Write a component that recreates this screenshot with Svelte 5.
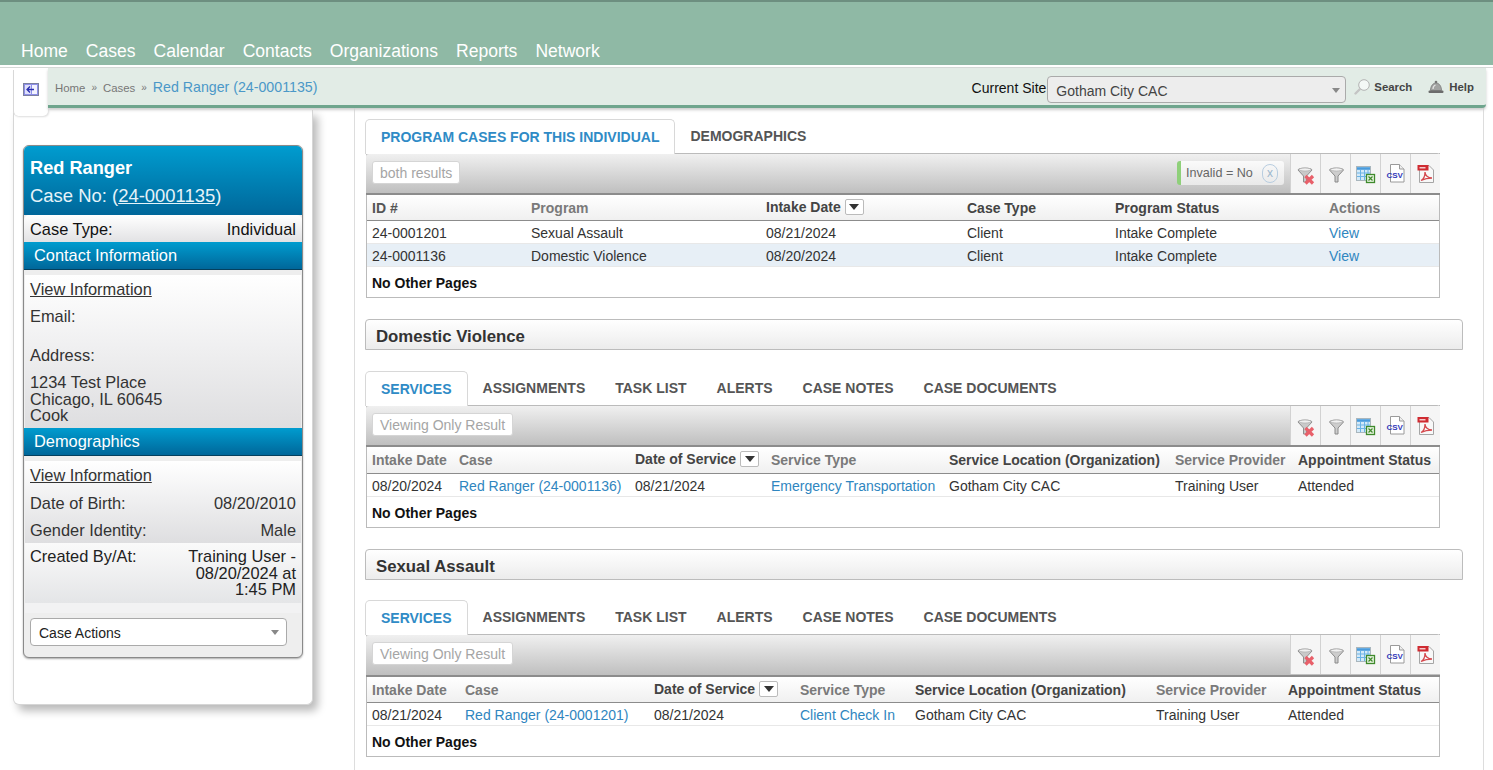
<script>
  const nav = ['Home', 'Cases', 'Calendar', 'Contacts', 'Organizations', 'Reports', 'Network'];
  const subTabs = ['ASSIGNMENTS', 'TASK LIST', 'ALERTS', 'CASE NOTES', 'CASE DOCUMENTS'];
  const t2 = [
    { h: 'Intake Date' }, { h: 'Case' }, { h: 'Date of Service', dark: true, sort: true }, { h: 'Service Type' },
    { h: 'Service Location (Organization)', dark: true }, { h: 'Service Provider' }, { h: 'Appointment Status', dark: true }
  ];
  const domestic = ['08/20/2024', 'Red Ranger (24-0001136)', '08/21/2024', 'Emergency Transportation', 'Gotham City CAC', 'Training User', 'Attended'];
  const sexual = ['08/21/2024', 'Red Ranger (24-0001201)', '08/21/2024', 'Client Check In', 'Gotham City CAC', 'Training User', 'Attended'];
  const links = [1, 3];
</script>

{#snippet tools()}
  <div class="tools">
    <span class="tool"><svg viewBox="0 0 20 22" width="20" height="22"><path d="M2 6C2 3.5 16 3.5 16 6L10.5 12V18H7.500V12z" fill="#c9c9c9" stroke="#8f8f8f"/><ellipse cx="9" cy="5.500" rx="6" ry="1.500" fill="#f0f0f0" stroke="#aaa" stroke-width="0.6"/><path d="M9.500 12l7.500 7.500M17 12l-7.500 7.500" stroke="#e8606a" stroke-width="3.200"/></svg></span>
    <span class="tool"><svg viewBox="0 0 20 22" width="20" height="22"><path d="M3.500 6C3.500 3.500 17.500 3.500 17.500 6L12 12V18H9V12z" fill="#cdcdcd" stroke="#8a8a8a"/><ellipse cx="10.500" cy="5.500" rx="6" ry="1.500" fill="#f2f2f2" stroke="#aaa" stroke-width="0.6"/></svg></span>
    <span class="tool"><svg viewBox="0 0 20 22" width="20" height="22"><rect x="0.500" y="2.500" width="14" height="14" fill="#d3e9f8" stroke="#a9b6bd"/><path d="M1 4.500h13" stroke="#4a9bdc" stroke-width="2.600"/><path d="M4.500 6v10M8.500 6v10M12 6v10M1 9h13M1 12.500h13" stroke="#6ab3e6"/><rect x="10.500" y="10.500" width="8" height="8" fill="#e9f4e2" stroke="#3f8a2c" stroke-width="1.300"/><path d="M12.500 12.500l4 4M16.500 12.500l-4 4" stroke="#3f8a2c" stroke-width="1.200"/></svg></span>
    <span class="tool"><svg viewBox="0 0 20 22" width="20" height="22"><path d="M4.500 0.500h9l4.500 4.500v13h-13.500z" fill="#fff" stroke="#9a9a9a"/><path d="M13.500 0.500v4.500h4.500" fill="#eee" stroke="#9a9a9a"/><text x="0.500" y="14" class="csv">CSV</text></svg></span>
    <span class="tool"><svg viewBox="0 0 20 22" width="20" height="22"><path d="M3.500 1.500h9.500l4.500 4.500v12.500h-14z" fill="#f8f8f8" stroke="#a5a5a5"/><rect x="1.500" y="1" width="11" height="5.500" fill="#cf2b31"/><rect x="3.500" y="3" width="6" height="1.500" fill="#f6c9cb"/><path d="M5 16.500c3-1.500 4-5 4-8.500 0 3.500 3 6 7 6-4 0-8 1-11 2.500z" fill="none" stroke="#d5484d" stroke-width="1.300"/></svg></span>
  </div>
{/snippet}

{#snippet sort()}
  <span class="sort"><svg viewBox="0 0 10 6" width="10" height="6"><path d="M0 0h10L5 6z" fill="#333"/></svg></span>
{/snippet}

{#snippet serviceSection(title, cols, row, cls)}
  <div class="section-title {cls}">{title}</div>
  <div class="tabs sub {cls}">
    <span class="tab active">SERVICES</span>
    {#each subTabs as t}<span class="tab">{t}</span>{/each}
  </div>
  <div class="panel">
    <div class="toolbar {cls}">
      <button class="soft">Viewing Only Result</button>
      <span class="spring"></span>
      {@render tools()}
    </div>
    <div class="grid head {cls}">
      {#each cols as c}
        <span class:dark={c.dark} class:raised={c.sort}>{c.h}{#if c.sort}{@render sort()}{/if}</span>
      {/each}
    </div>
    <div class="grid row {cls}">
      {#each row as cell, i}
        <span class:link={links.includes(i)}>{cell}</span>
      {/each}
    </div>
    <div class="foot">No Other Pages</div>
  </div>
{/snippet}

<div class="page">
  <header class="topnav">
    {#each nav as n}<span>{n}</span>{/each}
  </header>

  <div class="crumbrow">
    <div class="collapse">
      <svg viewBox="0 0 16 13" width="16" height="13"><rect x="0.5" y="0.5" width="15" height="12" fill="#8d8fe8" stroke="#7b7f9f"/><rect x="9" y="2" width="5" height="9" fill="#f2f2ff"/><rect x="2" y="2" width="6" height="9" fill="#dfe0fb"/><path d="M11 6.500H4M7 3.500L4 6.500l3 3" fill="none" stroke="#2b2fb0" stroke-width="1.3"/></svg>
    </div>
    <div class="crumbs">
      <span class="c">Home</span><span class="sep">»</span><span class="c">Cases</span><span class="sep">»</span><span class="cur">Red Ranger (24-0001135)</span>
      <span class="spring"></span>
      <span class="site-label">Current Site</span>
      <div class="site-select"><span>Gotham City CAC</span><i class="caret"></i></div>
      <span class="act search">
        <svg viewBox="0 0 16 16" width="16" height="16"><circle cx="10" cy="6" r="5.300" fill="#f4f8f6" stroke="#b3b3b3"/><path d="M6 10L1.500 14.500" stroke="#c4c4c4" stroke-width="2.400" stroke-linecap="round"/></svg>Search
      </span>
      <span class="act help">
        <svg viewBox="0 0 16 14" width="16" height="14"><path d="M2.500 10.500C2.500 6 5 3 8 3s5.500 3 5.500 7.500z" fill="#a2a3a2" stroke="#777" stroke-width="0.800"/><path d="M5 9c0-2 1-3.500 2.500-4" fill="none" stroke="#e4e4e4" stroke-width="1.200"/><circle cx="8" cy="2" r="1.300" fill="#777"/><rect x="0.500" y="10.500" width="15" height="2.500" rx="1" fill="#6c6c6c"/></svg>Help
      </span>
    </div>
  </div>

  <div class="content">
    <aside class="side">
      <div class="card">
        <div class="card-head">
          <div class="name">Red Ranger</div>
          <div class="caseno">Case No: (<u>24-0001135</u>)</div>
        </div>
        <div class="case-type"><span>Case Type:</span><span>Individual</span></div>
        <div class="bar">Contact Information</div>
        <div class="block contact">
          <div class="vi">View Information</div>
          <div class="lbl">Email:</div>
          <div class="lbl addr">Address:</div>
          <div class="address">1234 Test Place<br />Chicago, IL 60645<br />Cook</div>
        </div>
        <div class="bar">Demographics</div>
        <div class="block demo">
          <div class="vi">View Information</div>
          <div class="kv first"><span>Date of Birth:</span><span>08/20/2010</span></div>
          <div class="kv"><span>Gender Identity:</span><span>Male</span></div>
        </div>
        <div class="created">
          <span>Created By/At:</span>
          <span class="created-val">Training User -<br />08/20/2024 at<br />1:45 PM</span>
        </div>
        <div class="band"></div>
        <div class="actions">
          <div class="case-actions"><span>Case Actions</span><i class="caret"></i></div>
        </div>
      </div>
    </aside>

    <main class="main">
      <div class="tabs first">
        <span class="tab active">PROGRAM CASES FOR THIS INDIVIDUAL</span>
        <span class="tab">DEMOGRAPHICS</span>
      </div>
      <div class="panel">
        <div class="toolbar">
          <button class="soft">both results</button>
          <span class="spring"></span>
          <span class="chip">Invalid = No<b>x</b></span>
          {@render tools()}
        </div>
        <div class="grid head t1">
          <span class="mid">ID #</span><span>Program</span>
          <span class="dark raised">Intake Date{@render sort()}</span>
          <span class="dark">Case Type</span><span class="dark">Program Status</span><span>Actions</span>
        </div>
        <div class="grid row t1">
          <span>24-0001201</span><span>Sexual Assault</span><span>08/21/2024</span><span>Client</span><span>Intake Complete</span><span class="link">View</span>
        </div>
        <div class="grid row t1 alt">
          <span>24-0001136</span><span>Domestic Violence</span><span>08/20/2024</span><span>Client</span><span>Intake Complete</span><span class="link">View</span>
        </div>
        <div class="foot">No Other Pages</div>
      </div>

      {@render serviceSection('Domestic Violence', t2, domestic, 't2')}
      {@render serviceSection('Sexual Assault', t2, sexual, 't3')}
    </main>
  </div>
</div>

<style>
  :global(body) { margin: 0; background: #fff; }
  .page {
    width: 1493px; height: 770px; overflow: hidden; display: flex; flex-direction: column;
    font-family: "Liberation Sans", Arial, sans-serif; font-size: 14px; color: #333; background: #fff;
  }
  .spring { flex: 1; }

  .topnav {
    height: 65px; box-sizing: border-box; flex: none; background: #8fb9a5;
    border-top: 2px solid #6d8f80; display: flex; align-items: flex-end; gap: 18px;
    padding: 0 0 4px 21px; color: #fff; font-size: 17.55px; line-height: 20px;
  }

  .crumbrow { display: flex; flex: none; margin-top: 2px; padding: 0 7px 0 13px; height: 40px; border-top: 1px solid #d5d9d7; position: relative; z-index: 2; }
  .collapse {
    width: 35px; height: 46px; box-sizing: border-box; margin-top: 2px; background: #fff; flex: none;
    border-radius: 0 0 5px 5px; border-left: 1px solid #d8d8d8; box-shadow: 1px 1px 2px #ddd;
    display: flex; justify-content: center; padding-top: 13px;
  }
  .crumbs {
    flex: 1; height: 40px; box-sizing: border-box; background: #e2ece6; border-bottom: 3px solid #6fa58d;
    border-radius: 0 0 4px 0; display: flex; align-items: center; padding: 0 12px 0 7px; box-shadow: 0 2px 3px #ccc;
    font-size: 11.4px; color: #777;
  }
  .c { margin-top: 2px; }
  .sep { margin: 2px 6px 0; font-size: 10px; }
  .cur { color: #4b98c8; font-size: 14.2px; margin-top: 1px; }
  .site-label { color: #111; font-size: 14px; margin: 3px 1px 0 0; }
  .site-select {
    width: 299px; height: 27px; box-sizing: border-box; border: 1px solid #aaa; border-radius: 4px; background: #ededed; margin-top: 6px;
    display: flex; align-items: center; justify-content: space-between; padding: 2px 5px 0 8px; font-size: 14px; color: #444;
  }
  .caret { width: 0; height: 0; border-left: 4px solid transparent; border-right: 4px solid transparent; border-top: 5px solid #888; }
  .act { display: flex; align-items: center; font-size: 11.4px; font-weight: 700; color: #444; gap: 4px; margin-top: 1px; }
  .search { margin-left: 8px; }
  .help { margin-left: 16px; }
  .help svg { margin-right: 1px; }

  .content { flex: 1; display: flex; padding-left: 13px; min-height: 0; }
  .side {
    width: 300px; height: 595px; margin-top: 2px; box-sizing: border-box; flex: none; background: #fff;
    border: 1px solid #d6d6d6; border-top: 0; border-radius: 0 0 6px 6px; box-shadow: 5px 6px 8px #bbb;
    padding: 35px 9px 0 9px;
  }
  .card {
    border: 1px solid #8a8a8a; border-radius: 6px; background: #eee; height: 513px; box-sizing: border-box; overflow: hidden;
    box-shadow: 0 1px 2px #aaa;
  }
  .card-head { height: 69px; box-sizing: border-box; background: linear-gradient(#009ccf, #00679a); padding: 12px 6px 0; color: #fff; }
  .name { font-size: 18.2px; font-weight: 700; line-height: 20px; }
  .caseno { font-size: 18.45px; line-height: 20px; margin-top: 8px; color: #e6f3f9; }
  .case-type {
    height: 27px; box-sizing: border-box; padding: 5px 6px 0; display: flex; justify-content: space-between;
    font-size: 16.4px; line-height: 18px; color: #111; background: linear-gradient(#fff, #e2e2e4); border-radius: 5px 5px 0 0;
  }
  .bar {
    height: 28px; box-sizing: border-box; background: linear-gradient(#009ccf, #00679a); color: #fff; font-size: 16.4px;
    line-height: 26px; padding-left: 10px; border-bottom: 1px solid #04405e;
  }
  .block { margin-top: 5px; background: linear-gradient(#fff, #dedee0); padding: 5px 5px 0; font-size: 16.4px; line-height: 17px; margin-inline: 1px; }
  .block.contact { height: 153px; box-sizing: border-box; }
  .vi { text-decoration: underline; line-height: 18px; }
  .lbl { margin-top: 10px; }
  .lbl.addr { margin-top: 22px; }
  .address { margin-top: 10px; line-height: 16.5px; }
  .block.demo { height: 82px; box-sizing: border-box; }
  .kv { display: flex; justify-content: space-between; margin-top: 10px; }
  .kv.first { margin-top: 11px; }
  .created {
    height: 60px; box-sizing: border-box; margin-inline: 1px; padding: 5px 5px 0; display: flex; justify-content: space-between;
    background: linear-gradient(#fafafa, #e4e5e7); font-size: 16.4px; line-height: 16.5px; color: #222;
  }
  .created-val { text-align: right; }
  .band { height: 10px; background: #f2f2f3; margin-inline: 1px; }
  .actions { padding: 5px 6px; }
  .case-actions {
    width: 257px; height: 28px; box-sizing: border-box; background: #fff; border: 1px solid #aaa; border-radius: 4px;
    display: flex; align-items: center; justify-content: space-between; padding: 1px 7px 0 8px; font-size: 14px; color: #222;
  }

  .main {
    width: 1130px; margin-left: 41px; box-sizing: border-box; border-left: 1px solid #ddd; border-right: 1px solid #ddd;
    padding: 11px 0 0 10px; flex: none;
  }
  .tabs { display: flex; height: 34px; box-sizing: border-box; }
  .tabs.sub { margin-top: 21px; }
  .tabs.sub.t3 { margin-top: 20px; }
  .tab { padding: 0 15px; font-size: 14px; font-weight: 700; color: #555; line-height: 34px; }
  .tab.active {
    color: #2f8bc6; background: #fff; border: 1px solid #d8d8d8; border-bottom: 0; border-radius: 5px 5px 0 0;
    line-height: 35px; height: 35px; box-sizing: border-box; position: relative; z-index: 1;
  }
  .panel { width: 1074px; box-sizing: border-box; margin-left: 1px; border: 1px solid #bbb; border-top: 0; }
  .panel + .section-title { margin-top: 21px; }
  .toolbar {
    height: 42px; box-sizing: border-box; background: linear-gradient(#f0f0f0, #bfbfbf); border-bottom: 2px solid #8c8c8c;
    border-radius: 3px 3px 0 0; display: flex; align-items: flex-start; padding-left: 6px; margin-left: -1px; margin-right: -1px; border-top: 1px solid #bbb;
  }
  .toolbar.t3 { height: 43px; }
  .soft {
    margin-top: 7px; height: 23px; box-sizing: border-box; padding: 0 7px; font: 14px "Liberation Sans", Arial, sans-serif; color: #a5a5a5;
    background: #fff; border: 1px solid #d5d5d5; border-radius: 3px;
  }
  .chip {
    margin: 7px 6px 0 0; height: 24px; box-sizing: border-box; width: 107px; display: flex; align-items: center; justify-content: space-between;
    background: linear-gradient(#fafafa, #e9e9e9); border-left: 4px solid #8fd07a; border-radius: 3px; padding: 0 6px 0 5px; font-size: 12.6px; color: #666;
  }
  .chip b {
    width: 16px; height: 19px; box-sizing: border-box; border: 1px solid #b8cde0; border-radius: 9px; font-weight: 400; font-size: 12px; color: #9db6cc;
    display: flex; align-items: center; justify-content: center;
  }
  .tools { display: flex; height: 39px; }
  .tool {
    width: 30px; height: 39px; box-sizing: border-box; background: #f5f5f5; border-left: 1px solid #d2d2d2;
    display: flex; align-items: center; justify-content: center; padding-top: 2px;
  }
  .csv { font: 700 8px "Liberation Sans", Arial, sans-serif; fill: #3338b8; }

  .grid { display: grid; padding-left: 5px; }
  .t1 { grid-template-columns: 159px 235px 201px 148px 214px 1fr; }
  .grid.t2 { grid-template-columns: 87px 176px 136px 178px 226px 123px 1fr; }
  .grid.t3 { grid-template-columns: 93px 189px 146px 115px 241px 132px 1fr; }
  .head {
    height: 26px; box-sizing: border-box; align-items: center; font-weight: 700; color: #7a7a7a; font-size: 14px;
    background: linear-gradient(#fff, #f0f0f0); border-bottom: 1px solid #8c8c8c;
  }
  .head.t2 { height: 27px; }
  .head .dark { color: #444; }
  .head .mid { color: #555; }
  .head .raised { display: flex; align-items: center; margin-top: -2px; }
  .sort {
    width: 19px; height: 16px; margin-left: 4px; box-sizing: border-box; border: 1px solid #bbb; border-radius: 2px; background: #fff;
    display: inline-flex; align-items: center; justify-content: center;
  }
  .row { height: 23px; box-sizing: border-box; align-items: center; border-bottom: 1px solid #e8e8e8; color: #333; padding-top: 1px; }
  .row.alt { background: #e7eff6; }
  .link { color: #2f86c0; }
  .foot { height: 30px; box-sizing: border-box; padding: 8px 0 0 5px; font-weight: 700; color: #111; }
  .section-title {
    height: 31px; width: 1098px; box-sizing: border-box; border: 1px solid #bcbcbc; border-radius: 4px 4px 0 0;
    background: linear-gradient(#fff, #ececec); font-size: 16.8px; font-weight: 700; color: #333; line-height: 33px; padding-left: 10px;
  }
</style>
